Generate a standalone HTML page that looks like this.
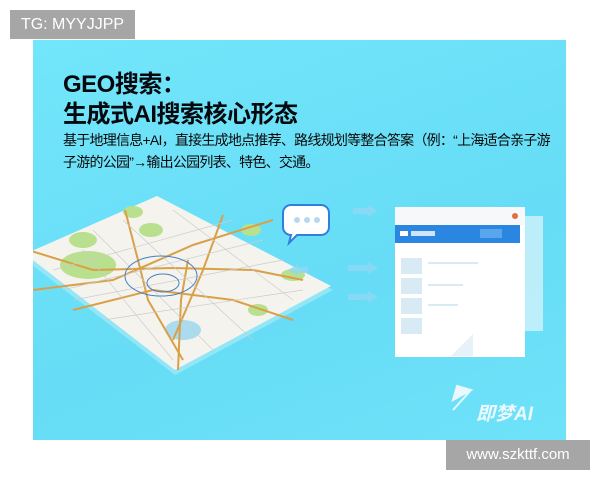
<!DOCTYPE html>
<html><head><meta charset="utf-8"><style>
body{margin:0;width:600px;height:480px;background:#fff;position:relative;overflow:hidden;font-family:"Liberation Sans","Noto Sans CJK SC",sans-serif}
.img{position:absolute;left:33px;top:40px;width:533px;height:400px;background:linear-gradient(160deg,#72e6fa 0%,#66dcf6 60%,#6ee2f8 100%);overflow:hidden}
.t{position:absolute;left:30px;font-weight:bold;color:#05080c;white-space:nowrap}
.tg{position:absolute;left:10px;top:10px;width:125px;height:29px;background:#a6a6a6;color:#fff;font-size:16px;line-height:29px;text-align:center}
.url{position:absolute;left:446px;top:440px;width:144px;height:30px;background:#a6a6a6;color:#fff;font-size:15px;line-height:30px;text-align:center}
</style></head><body>
<div class="tg">TG: MYYJJPP</div>
<div class="img">
<div class="t" style="top:24px;font-size:24px;letter-spacing:-0.5px">GEO搜索：</div>
<div class="t" style="top:54px;font-size:24px;letter-spacing:-0.5px">生成式AI搜索核心形态</div>
<div class="t" style="top:90px;font-size:14px;font-weight:normal;letter-spacing:-0.75px;color:#080808">基于地理信息+AI，直接生成地点推荐、路线规划等整合答案（例：“上海适合亲子游</div>
<div class="t" style="top:112px;font-size:14px;font-weight:normal;letter-spacing:-0.75px;color:#080808">子游的公园”→输出公园列表、特色、交通。</div>
<svg width="533" height="400" style="position:absolute;left:0;top:0">
<polygon points="124,160 300,250 142,335 -10,218" fill="#9ee8f6" opacity="0.8"/>
<polygon points="124,156 298,246 142,330 -8,214" fill="#f4f3ee"/>
<ellipse cx="55" cy="225" rx="28" ry="14" fill="#b8e08e"/>
<ellipse cx="50" cy="200" rx="14" ry="8" fill="#b8e08e"/>
<ellipse cx="118" cy="190" rx="12" ry="7" fill="#b8e08e"/>
<ellipse cx="100" cy="172" rx="10" ry="6" fill="#b8e08e"/>
<ellipse cx="260" cy="235" rx="12" ry="6" fill="#b8e08e"/>
<ellipse cx="218" cy="190" rx="10" ry="6" fill="#b8e08e"/>
<ellipse cx="225" cy="270" rx="10" ry="6" fill="#b8e08e"/>
<ellipse cx="150" cy="290" rx="18" ry="10" fill="#a9dcee"/>
<g stroke="#d9a048" stroke-width="2" fill="none">
<path d="M-5,210 L60,230 L140,228 L220,230 L270,240"/>
<path d="M0,250 L80,240 L160,205 L240,180"/>
<path d="M92,170 L105,220 L115,260 L150,320"/>
<path d="M155,220 L148,260 L145,330"/>
<path d="M40,270 L120,250 L200,260 L260,280"/>
<path d="M190,175 L170,230 L140,300"/>
</g>
<g stroke="#ccc" stroke-width="0.7" fill="none">
<path d="M20,230 L200,180 M30,250 L230,200 M40,260 L250,220 M70,280 L270,250 M60,190 L180,310 M90,180 L220,300 M140,170 L260,260 M50,210 L140,320"/>
</g>
<ellipse cx="128" cy="236" rx="36" ry="20" stroke="#4a7fc2" stroke-width="1" fill="none"/>
<ellipse cx="130" cy="243" rx="16" ry="9" stroke="#4a7fc2" stroke-width="1" fill="none"/>
<g fill="#8fd8f4" opacity="0.8">
<polygon points="255,230 265,224 265,236"/><rect x="265" y="227" width="10" height="6"/>
<polygon points="345,171 335,165 335,177"/><rect x="320" y="168" width="15" height="6"/>
<polygon points="345,228 335,222 335,234"/><rect x="315" y="225" width="20" height="6"/>
<polygon points="345,257 335,251 335,263"/><rect x="315" y="254" width="20" height="6"/>
</g>
<path d="M258,165 h30 a8,8 0 0 1 8,8 v14 a8,8 0 0 1 -8,8 h-24 l-8,8 l2,-8 a8,8 0 0 1 -8,-8 v-14 a8,8 0 0 1 8,-8z" fill="#fff" stroke="#2f7fe0" stroke-width="2"/>
<circle cx="264" cy="180" r="3" fill="#b8d8f0"/><circle cx="274" cy="180" r="3" fill="#b8d8f0"/><circle cx="284" cy="180" r="3" fill="#b8d8f0"/>
<rect x="375" y="176" width="135" height="115" fill="#dff5fc" opacity="0.7"/>
<rect x="362" y="167" width="130" height="150" fill="#fff"/>
<rect x="362" y="167" width="130" height="18" fill="#f6f8fa"/>
<circle cx="482" cy="176" r="3" fill="#e07040"/>
<rect x="362" y="185" width="125" height="18" fill="#2a86e0"/>
<rect x="367" y="191" width="8" height="5" fill="#fff"/><rect x="378" y="191" width="24" height="5" fill="#cfe4f8"/>
<rect x="447" y="189" width="22" height="9" fill="#5aa6ec"/>
<g fill="#d8eaf4"><rect x="368" y="218" width="21" height="16"/><rect x="368" y="238" width="21" height="16"/><rect x="368" y="258" width="21" height="16"/><rect x="368" y="278" width="21" height="16"/>
<rect x="395" y="222" width="50" height="2"/><rect x="395" y="244" width="35" height="2"/><rect x="395" y="264" width="30" height="2"/></g>
<polygon points="418,316 440,294 440,316" fill="#e6f2f8"/>
<path d="M420,360 l18,-10 l-14,-4 z M420,370 l18,-20" fill="#e8f8fd" stroke="#e8f8fd" stroke-width="2"/>
<text x="443" y="380" font-size="19" font-style="italic" font-weight="bold" fill="#eaf9fd" font-family="Liberation Sans,Noto Sans CJK SC,sans-serif">即梦AI</text>
</svg>
</div>
<div class="url">www.szkttf.com</div>
</body></html>
